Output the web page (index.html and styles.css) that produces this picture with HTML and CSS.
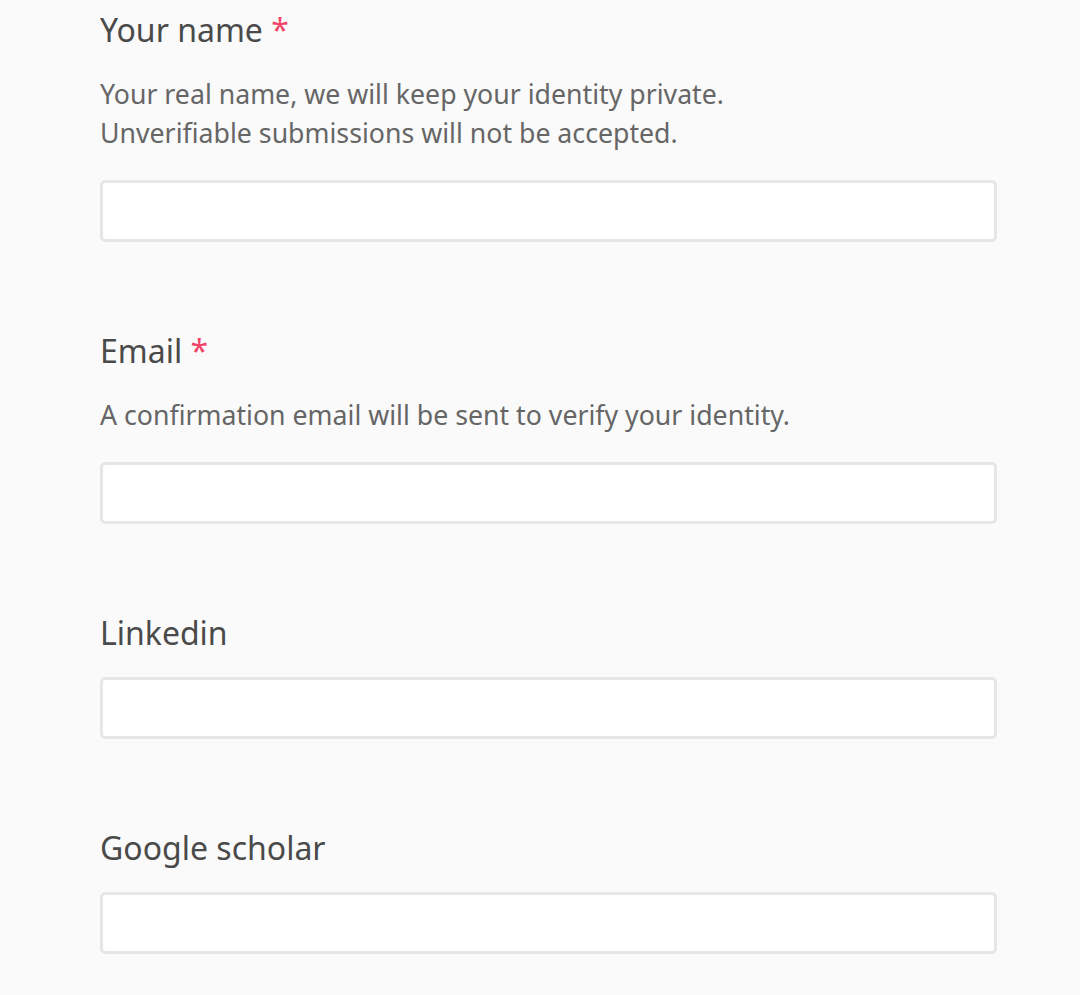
FILE: index.html
```html
<!DOCTYPE html>
<html>
<head>
<meta charset="utf-8">
<link rel="stylesheet" href="styles.css">
</head>
<body>
<form class="form">
  <div class="field">
    <label class="label">Your name <span class="req">*</span></label>
    <p class="help">Your real name, we will keep your identity private.<br>Unverifiable submissions will not be accepted.</p>
    <input class="input" type="text">
  </div>
  <div class="field">
    <label class="label">Email <span class="req">*</span></label>
    <p class="help">A confirmation email will be sent to verify your identity.</p>
    <input class="input" type="text">
  </div>
  <div class="field">
    <label class="label">Linkedin</label>
    <input class="input" type="text">
  </div>
  <div class="field">
    <label class="label">Google scholar</label>
    <input class="input" type="text">
  </div>
</form>
</body>
</html>
```
FILE: styles.css
```css
html, body {
  margin: 0;
  padding: 0;
  background: #fafafa;
}
body {
  font-family: "Noto Sans", "Open Sans", sans-serif;
  color: #4a4a4a;
}
.form {
  display: flex;
  flex-direction: column;
  gap: 89px;
  padding: 10px 0 0 100px;
  width: 897px;
}
.field {
  display: flex;
  flex-direction: column;
}
.label {
  display: block;
  font-size: 32px;
  line-height: 40px;
  color: #4a4a4a;
}
.req {
  color: #f14668;
}
.help {
  margin: 23.5px 0 0;
  font-size: 26.7px;
  line-height: 39px;
  color: #666;
}
.input {
  box-sizing: border-box;
  height: 62px;
  width: 100%;
  margin: 24px 0 0;
  border: 3px solid #e6e6e6;
  border-radius: 5px;
  background: #fff;
  outline: none;
}
.help + .input {
  margin-top: 28.5px;
}
```
